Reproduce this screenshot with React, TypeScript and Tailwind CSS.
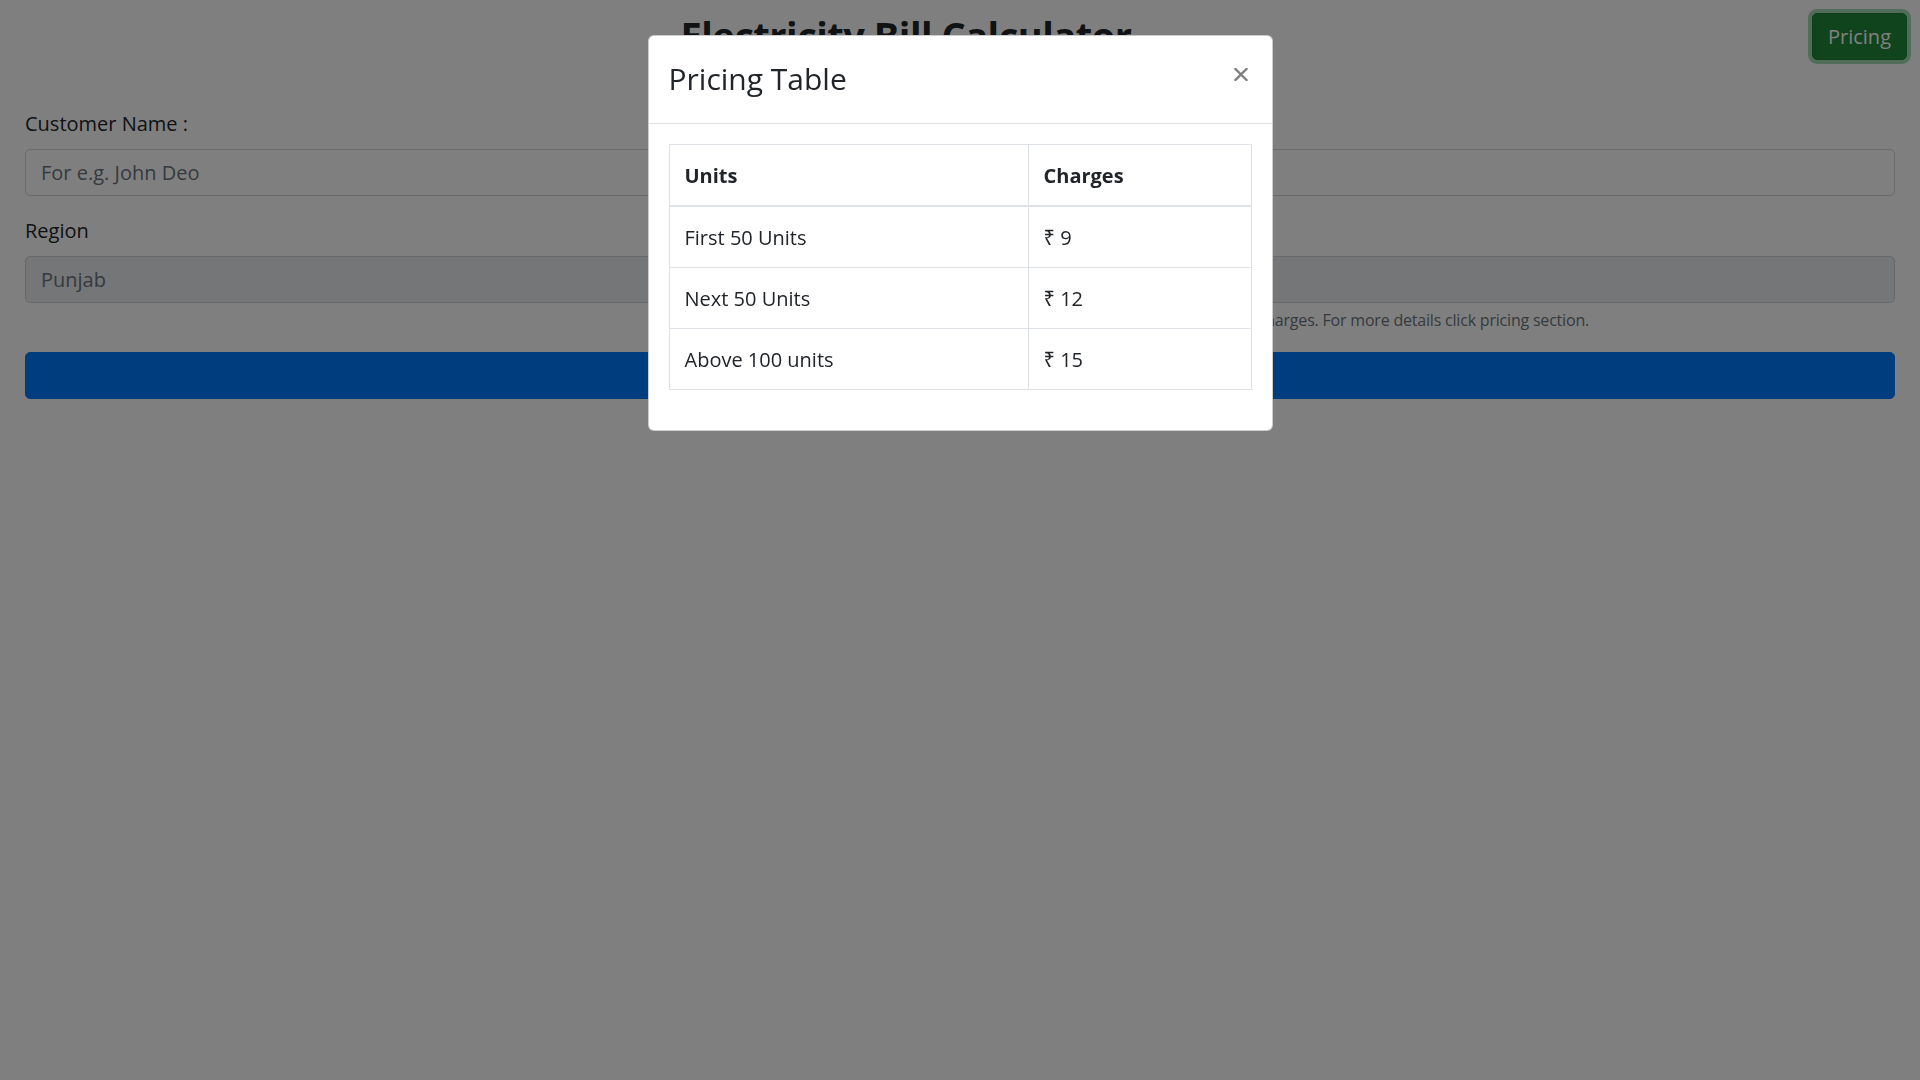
import React from "react";

const rows = [
  { units: "First 50 Units", charge: "₹ 9" },
  { units: "Next 50 Units", charge: "₹ 12" },
  { units: "Above 100 units", charge: "₹ 15" },
];

export default function App() {
  return (
    <div className="relative min-h-screen bg-white text-[#212529] font-['Open_Sans','Noto_Sans',sans-serif] text-[20px] leading-[30px]">
      {/* Page header */}
      <div className="flex items-start">
        <h2 className="flex-1 text-center mt-[11px] text-[38px] leading-[48px] font-bold tracking-[-0.5px]">
          Electricity Bill Calculator
        </h2>
        <button className="mt-[13px] mr-[13px] h-[47px] px-[15px] rounded-[5px] bg-[#218838] border border-[#1e7e34] text-white text-[20px] leading-[30px] shadow-[0_0_0_4px_rgba(72,180,97,0.5)]">
          Pricing
        </button>
      </div>

      {/* Form */}
      <div className="px-[25px] mt-[49px]">
        <div className="mb-[20px]">
          <label className="block mb-[10px]">Customer Name :</label>
          <input
            className="block w-full h-[47px] px-[15px] rounded-[5px] border border-[#ced4da] bg-white text-[20px] placeholder:text-[#6c757d] outline-none"
            placeholder="For e.g. John Deo"
          />
        </div>
        <div className="mb-[20px]">
          <label className="block mb-[10px]">Region</label>
          <input
            className="block w-full h-[47px] px-[15px] rounded-[5px] border border-[#ced4da] bg-[#e9ecef] text-[20px] text-[#6c757d] outline-none"
            value="Punjab"
            readOnly
          />
          <small className="block w-[1564px] text-right mt-[5px] text-[16px] leading-[24px] text-[#6c757d] tracking-[-0.2px]">
            Per unit charges. For more details click pricing section.
          </small>
        </div>
        <button className="block w-full h-[47px] rounded-[5px] bg-[#007bff] border border-[#007bff]"></button>
      </div>

      {/* Backdrop */}
      <div className="fixed inset-0 bg-black/50"></div>

      {/* Modal */}
      <div className="fixed inset-0 flex justify-center items-start pt-[35px]">
        <div className="w-[625px] bg-white rounded-[6px] border border-black/20">
          <div className="flex items-start p-[20px] border-b border-[#dee2e6]">
            <h4 className="flex-1 text-[30px] leading-[45px] font-medium">Pricing Table</h4>
            <button className="mt-[-11px] mr-[-18px] ml-auto w-[58px] h-[58px] flex items-center justify-center">
              <svg width="14" height="13" viewBox="0 0 14 13">
                <path d="M1.5 1 L12.5 12 M12.5 1 L1.5 12" stroke="#808080" strokeWidth="2.4" strokeLinecap="square" />
              </svg>
            </button>
          </div>
          <div className="p-[20px]">
            <table className="w-full mb-[20px] border-collapse border border-[#dee2e6]">
              <thead>
                <tr>
                  <th className="w-[359px] text-left font-bold px-[15px] pt-[16px] pb-[14px] border border-[#dee2e6] border-b-2">Units</th>
                  <th className="text-left font-bold px-[15px] pt-[16px] pb-[14px] border border-[#dee2e6] border-b-2">Charges</th>
                </tr>
              </thead>
              <tbody>
                {rows.map((r) => (
                  <tr key={r.units}>
                    <td className="px-[15px] pt-[16px] pb-[14px] border border-[#dee2e6]">{r.units}</td>
                    <td className="px-[15px] pt-[16px] pb-[14px] border border-[#dee2e6]">{r.charge}</td>
                  </tr>
                ))}
              </tbody>
            </table>
          </div>
        </div>
      </div>
    </div>
  );
}
